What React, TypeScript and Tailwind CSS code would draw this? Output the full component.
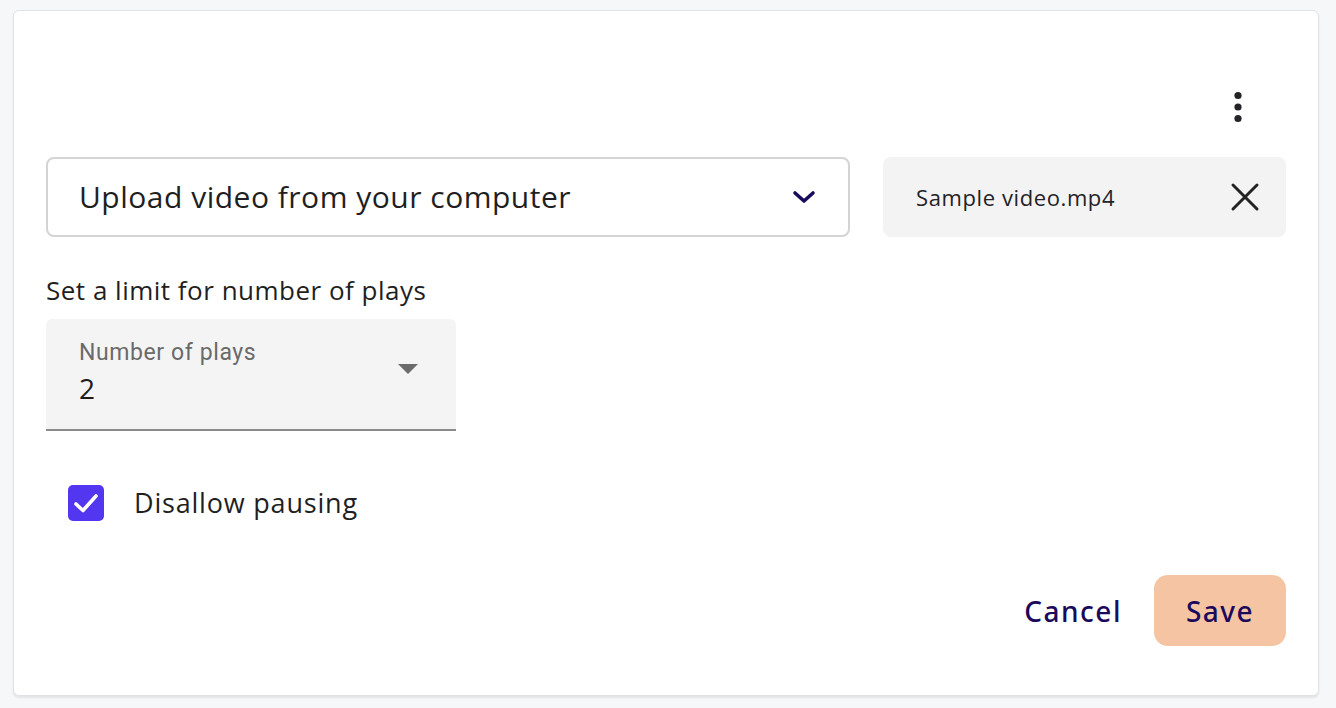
import React, { useState } from 'react';

const body = { fontFamily: '"Open Sans", "Noto Sans", sans-serif' };
const btn = { fontFamily: '"Noto Sans", "Open Sans", sans-serif' };
const mui = { fontFamily: 'Roboto, "Noto Sans", sans-serif' };

function KebabIcon() {
  return (
    <svg width="24" height="32" viewBox="0 0 24 32" fill="#222428">
      <circle cx="12" cy="4.5" r="3.6" />
      <circle cx="12" cy="16" r="3.6" />
      <circle cx="12" cy="27.5" r="3.6" />
    </svg>
  );
}

export default function App() {
  const [checked, setChecked] = useState(true);

  return (
    <div className="min-h-screen w-full bg-[#f6f7f9] pt-[10px] pl-[13px]" style={body}>
      <div className="w-[1306px] h-[686px] bg-white border border-[#e1e2e5] rounded-md shadow-[0_2px_2px_rgba(0,0,0,0.08)] px-8 pt-[72px] flex flex-col">
        {/* menu */}
        <div className="flex justify-end h-12 pr-6">
          <button className="w-12 h-12 flex items-center justify-center">
            <KebabIcon />
          </button>
        </div>

        {/* source row */}
        <div className="flex gap-[33px] mt-[26px]">
          <div className="w-[804px] h-20 border-2 border-[#d4d4d4] rounded-lg flex items-center justify-between pl-[31px] pr-[30px]">
            <span className="text-[30px] text-[#1f1f22] tracking-[0.5px] mt-[-2px]">Upload video from your computer</span>
            <svg width="28" height="18" viewBox="0 0 28 18" fill="none" stroke="#1a0c5c" strokeWidth="3.6" strokeLinecap="round" strokeLinejoin="round">
              <path d="M5 5 L14 13 L23 5" />
            </svg>
          </div>
          <div className="flex-1 h-20 bg-[#f3f3f3] rounded-lg flex items-center justify-between pl-[33px] pr-[26px]">
            <span className="text-[22px] text-[#232326] tracking-[0.6px]">Sample video.mp4</span>
            <svg width="30" height="30" viewBox="0 0 30 30" fill="none" stroke="#222" strokeWidth="3" strokeLinecap="round">
              <path d="M3 3 L27 27 M27 3 L3 27" />
            </svg>
          </div>
        </div>

        {/* plays limit */}
        <div className="mt-[37px] text-[26px] leading-8 text-[#1f1f22] tracking-[0.5px]">Set a limit for number of plays</div>
        <div className="mt-[13px] w-[410px] h-[112px] bg-[#f4f4f4] rounded-t-md border-b-2 border-[#8a8a8a] flex items-center justify-between pl-[33px] pr-[38px]" style={mui}>
          <div className="flex flex-col mt-[-4px]">
            <span className="text-[23px] leading-7 text-[#6a6a6a] tracking-[0.6px]">Number of plays</span>
            <span className="text-[28px] leading-9 text-[#1c1c1c] mt-[3px]" style={body}>2</span>
          </div>
          <svg width="20" height="12" viewBox="0 0 20 12" className="mt-[-10px]">
            <path d="M0 1 L20 1 L10 11 Z" fill="#6b6b6b" />
          </svg>
        </div>

        {/* checkbox */}
        <label className="mt-[54px] ml-[22px] flex items-center gap-[30px] cursor-pointer">
          <span
            onClick={() => setChecked(!checked)}
            className="w-9 h-9 rounded-[5px] bg-[#5236f0] flex items-center justify-center"
          >
            {checked && (
              <svg width="26" height="22" viewBox="0 0 26 22" fill="none" stroke="white" strokeWidth="3.6" strokeLinecap="round" strokeLinejoin="round">
                <path d="M3 12 L10 18.5 L23 4" />
              </svg>
            )}
          </span>
          <span className="text-[27px] leading-8 text-[#1f1f22] tracking-[0.8px] mt-[-1px]">Disallow pausing</span>
        </label>

        {/* actions */}
        <div className="mt-[54px] flex justify-end items-center gap-[32px]" style={btn}>
          <button className="text-[28px] font-medium text-[#1b0a5c] tracking-[1.5px]">Cancel</button>
          <button className="w-[132px] h-[71px] rounded-[14px] bg-[#f4c4a3] text-[28px] font-medium text-[#1b0a5c] tracking-[1.5px]">Save</button>
        </div>
      </div>
    </div>
  );
}
